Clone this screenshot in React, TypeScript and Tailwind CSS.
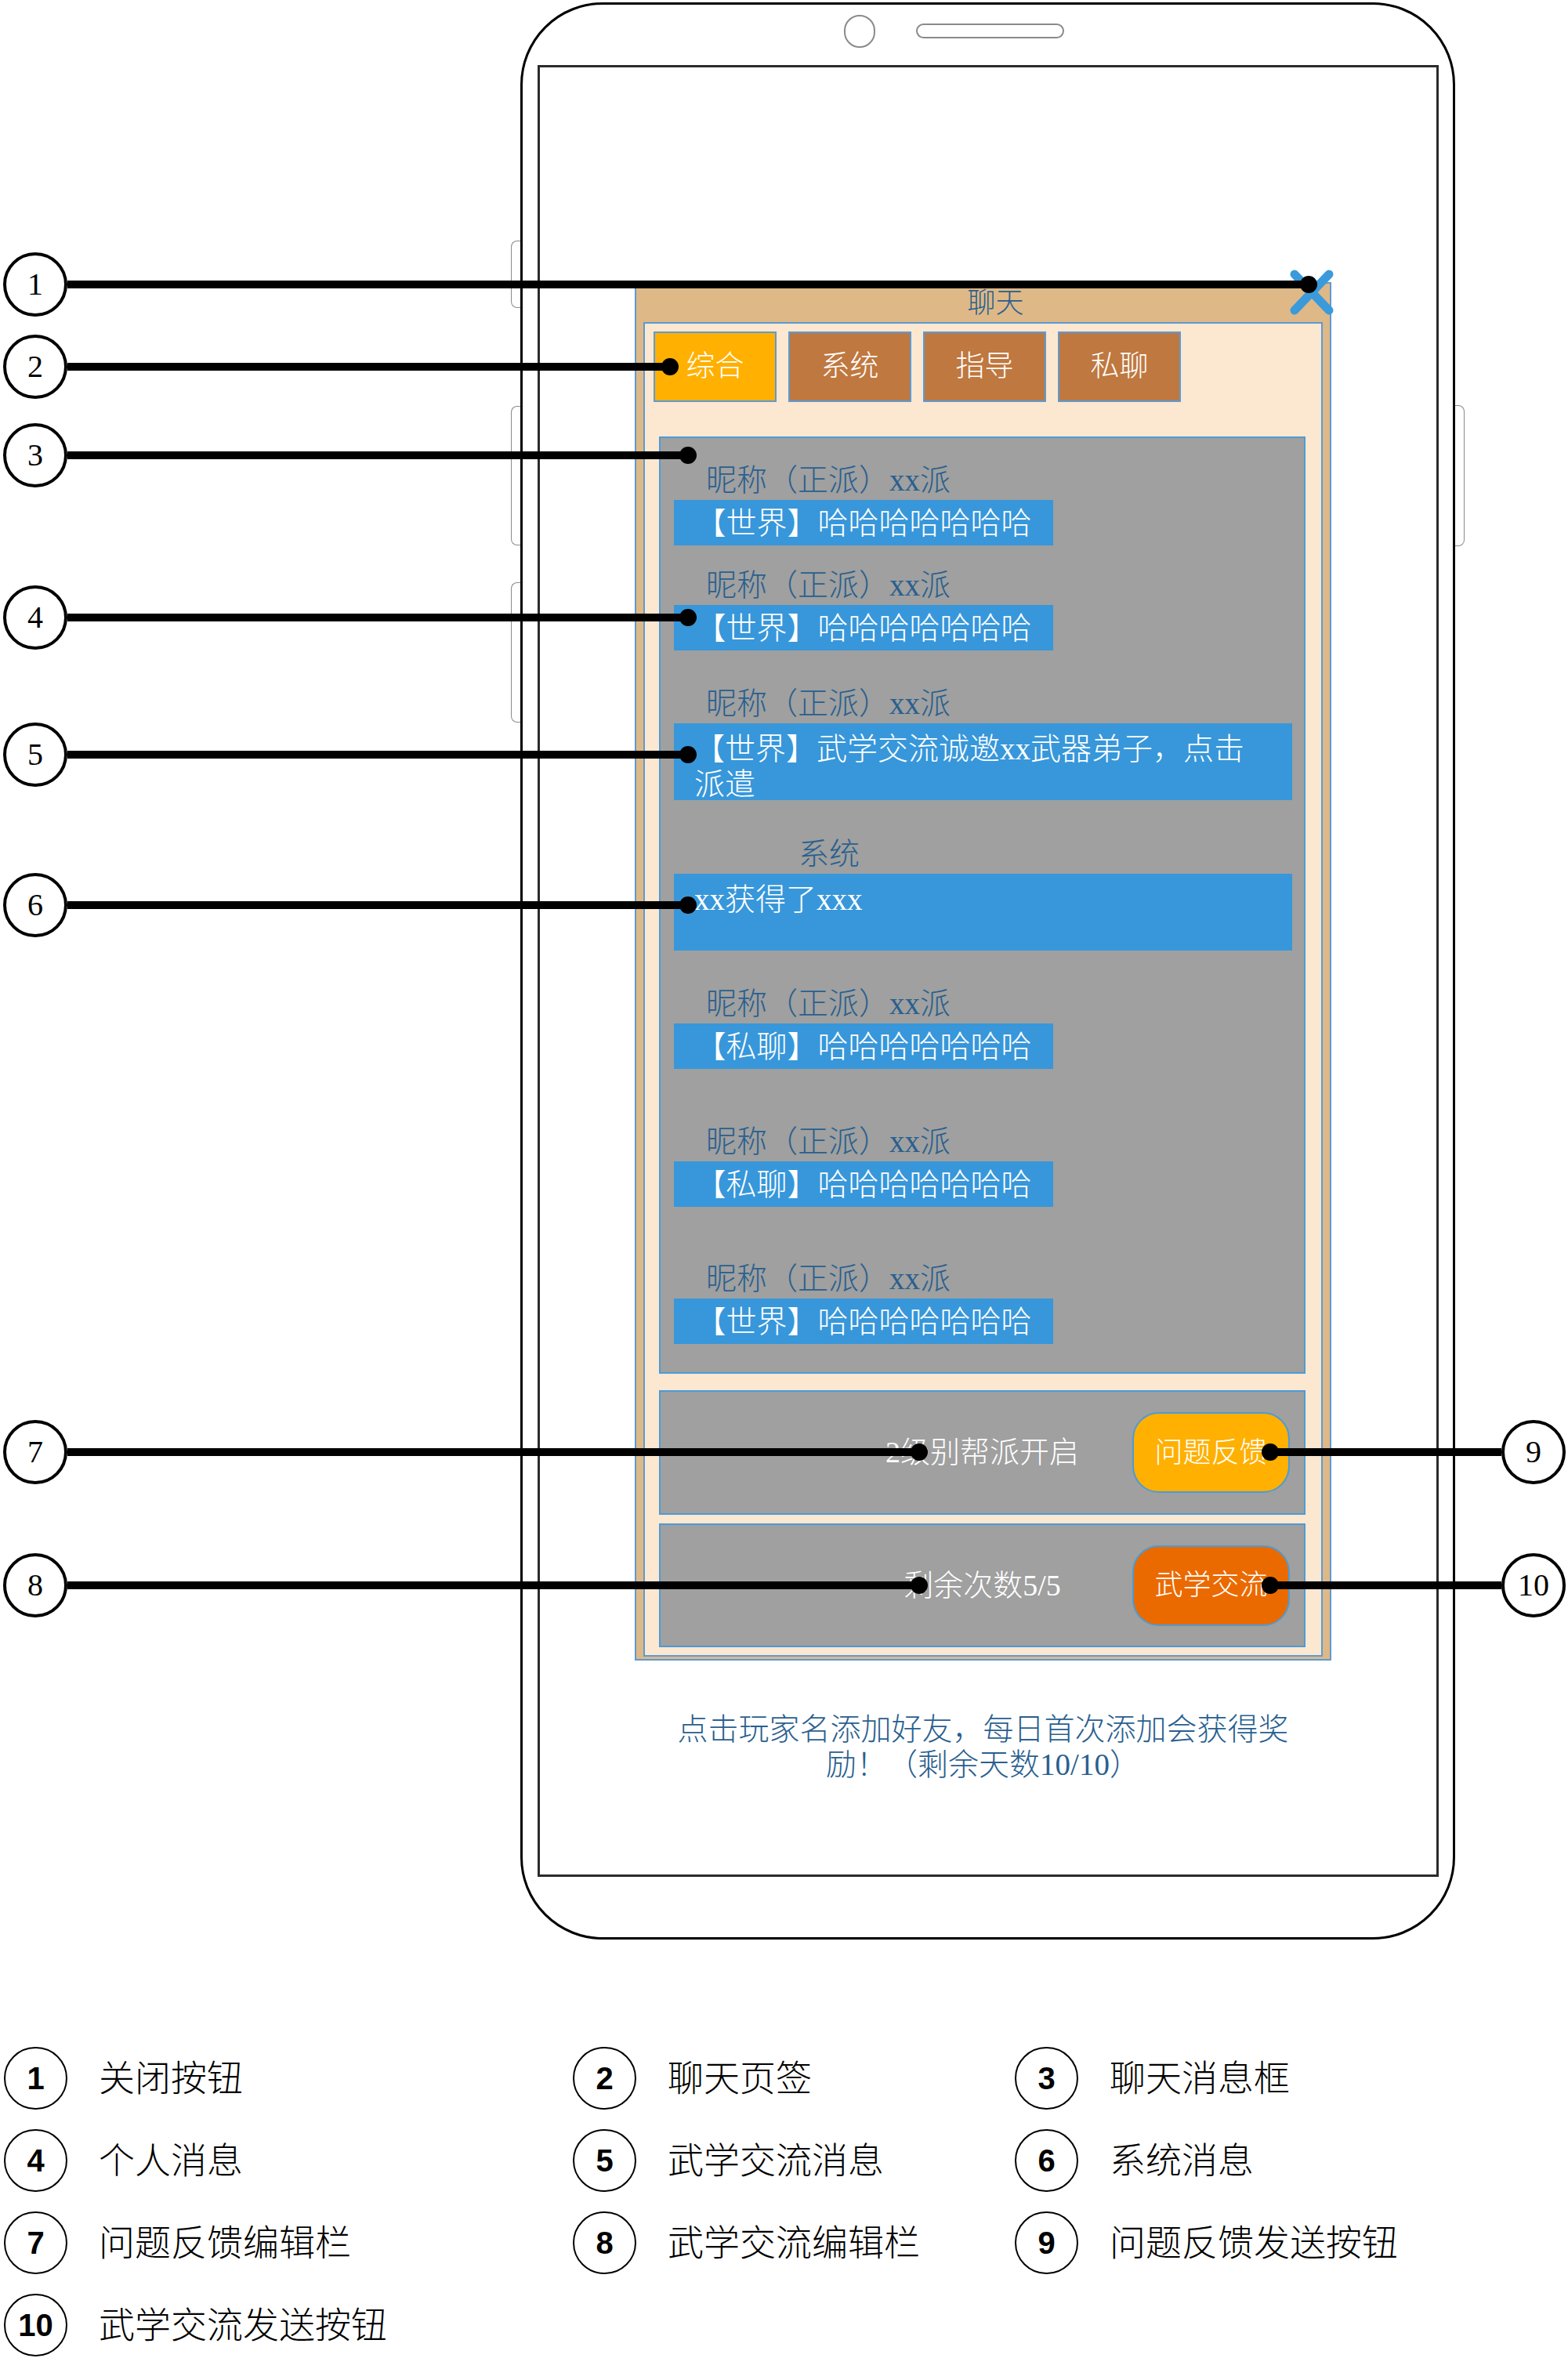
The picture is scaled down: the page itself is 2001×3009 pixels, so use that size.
const serif = "font-['Liberation_Serif','Noto_Sans_CJK_SC',serif]";
const sans = "font-['Liberation_Sans','Noto_Sans_CJK_SC',sans-serif]";

type Msg = {
  gap: string;
  label: string;
  labelPad: string;
  text: string;
  wide: boolean;
};

const messages: Msg[] = [
  { gap: "mt-0", label: "昵称（正派）xx派", labelPad: "pl-[41px]", text: "【世界】哈哈哈哈哈哈哈", wide: false },
  { gap: "mt-[31px]", label: "昵称（正派）xx派", labelPad: "pl-[41px]", text: "【世界】哈哈哈哈哈哈哈", wide: false },
  { gap: "mt-[48px]", label: "昵称（正派）xx派", labelPad: "pl-[41px]", text: "【世界】武学交流诚邀xx武器弟子，点击派遣", wide: true },
  { gap: "mt-[49px]", label: "系统", labelPad: "pl-[159px]", text: "xx获得了xxx", wide: true },
  { gap: "mt-[48px]", label: "昵称（正派）xx派", labelPad: "pl-[41px]", text: "【私聊】哈哈哈哈哈哈哈", wide: false },
  { gap: "mt-[73px]", label: "昵称（正派）xx派", labelPad: "pl-[41px]", text: "【私聊】哈哈哈哈哈哈哈", wide: false },
  { gap: "mt-[72px]", label: "昵称（正派）xx派", labelPad: "pl-[41px]", text: "【世界】哈哈哈哈哈哈哈", wide: false },
];

const callouts = [
  { n: "1", y: 363, x: 1670, right: false },
  { n: "2", y: 468, x: 855, right: false },
  { n: "3", y: 581, x: 878, right: false },
  { n: "4", y: 788, x: 878, right: false },
  { n: "5", y: 963, x: 878, right: false },
  { n: "6", y: 1155, x: 878, right: false },
  { n: "7", y: 1853, x: 1173, right: false },
  { n: "8", y: 2023, x: 1173, right: false },
  { n: "9", y: 1853, x: 1621, right: true },
  { n: "10", y: 2023, x: 1621, right: true },
];

const legend = [
  { n: "1", t: "关闭按钮" },
  { n: "2", t: "聊天页签" },
  { n: "3", t: "聊天消息框" },
  { n: "4", t: "个人消息" },
  { n: "5", t: "武学交流消息" },
  { n: "6", t: "系统消息" },
  { n: "7", t: "问题反馈编辑栏" },
  { n: "8", t: "武学交流编辑栏" },
  { n: "9", t: "问题反馈发送按钮" },
  { n: "10", t: "武学交流发送按钮" },
];

const tabs = ["综合", "系统", "指导", "私聊"];

const Bar = ({
  text,
  button,
  color,
  height,
}: {
  text: string;
  button: string;
  color: string;
  height: string;
}) => (
  <div className={`grid grid-cols-[1fr_auto_1fr] items-center border-2 border-[#4c9bd6] bg-[#9fa09f] ${height}`}>
    <div />
    <span className="text-[38px] font-light leading-[45px] text-white">{text}</span>
    <div
      className={`mr-[18px] flex h-[103px] w-[201px] items-center justify-center justify-self-end rounded-[34px] border-2 border-[#4c9bd6] text-[36px] font-light text-white ${color}`}
    >
      {button}
    </div>
  </div>
);

const Callout = ({ n, y, x, right }: { n: string; y: number; x: number; right: boolean }) => {
  const circleLeft = right ? 1916 : 4;
  const lineLeft = right ? x : 86;
  const lineWidth = right ? 1916 - x : x - 86;
  return (
    <>
      <div className="absolute h-[10px] bg-black" style={{ left: lineLeft, top: y - 5, width: lineWidth }} />
      <div className="absolute h-[22px] w-[22px] rounded-full bg-black" style={{ left: x - 11, top: y - 11 }} />
      <div
        className={`absolute flex h-[82px] w-[82px] items-center justify-center rounded-full border-4 border-black bg-white text-[40px] leading-none text-black ${serif}`}
        style={{ left: circleLeft, top: y - 41 }}
      >
        {n}
      </div>
    </>
  );
};

export default function App() {
  return (
    <div className={`relative h-[3009px] w-[2001px] overflow-hidden bg-white ${serif}`}>
      <div className="pt-[3px]">
        {/* Phone */}
        <div className="relative ml-[664px] flex h-[2472px] w-[1193px] flex-col rounded-[105px] border-[3px] border-black">
          {/* side keys */}
          <div className="absolute left-[-15px] top-[301px] h-[86px] w-[12px] rounded-l-[8px] border-[1.5px] border-r-0 border-[#8a8a8a]" />
          <div className="absolute left-[-15px] top-[512px] h-[178px] w-[12px] rounded-l-[8px] border-[1.5px] border-r-0 border-[#8a8a8a]" />
          <div className="absolute left-[-15px] top-[737px] h-[179px] w-[12px] rounded-l-[8px] border-[1.5px] border-r-0 border-[#8a8a8a]" />
          <div className="absolute right-[-15px] top-[511px] h-[180px] w-[12px] rounded-r-[8px] border-[1.5px] border-l-0 border-[#8a8a8a]" />

          {/* camera + speaker */}
          <div className="flex h-[77px] items-start pl-[410px] pt-[13px]">
            <div className="h-[42px] w-[40px] rounded-full border-2 border-[#8a8a8a]" />
            <div className="ml-[52px] mt-[11px] h-[19px] w-[189px] rounded-full border-2 border-[#8a8a8a]" />
          </div>

          {/* Screen */}
          <div className="ml-[19px] mr-[18px] h-[2312px] border-[3px] border-[#2b2b2b] pl-[121px] pt-[274px]">
            {/* Chat panel */}
            <div className="relative w-[889px] border-2 border-[#5b9bd5] bg-[#deb887] px-[9px] pb-[3px]">
              <svg className="absolute left-[832px] top-[-19px] h-[60px] w-[60px]" viewBox="0 0 60 60">
                <path d="M8 7 L52 53 M52 7 L8 53" stroke="#3a9adb" strokeWidth="11" strokeLinecap="round" fill="none" />
              </svg>
              <div className="flex h-[49px] items-center justify-center pl-[32px] text-[36px] font-light text-[#2a5f8f]">聊天</div>

              <div className="border-2 border-[#5b9bd5] bg-[#fce7d0] pb-[10px] pl-[18px] pr-[20px] pt-[10px]">
                {/* Tabs */}
                <div className="ml-[-7px] flex gap-[15px]">
                  {tabs.map((t, i) => (
                    <div
                      key={t}
                      className={`flex h-[90px] w-[157px] items-center justify-center border-2 border-[#5b9bd5] text-[37px] font-light text-white ${
                        i === 0 ? "bg-[#ffb000]" : "bg-[#bf783f]"
                      }`}
                    >
                      {t}
                    </div>
                  ))}
                </div>

                {/* Message list */}
                <div className="mt-[44px] flex h-[1196px] flex-col border-2 border-[#4c9bd6] bg-[#9fa09f] pl-[17px] pr-[15px] pt-[34px]">
                  {messages.map((m, i) => (
                    <div key={i} className={m.gap}>
                      <div className={`h-[40px] text-[39px] font-light leading-[40px] text-[#2a5f8f] ${m.labelPad}`}>{m.label}</div>
                      {m.wide ? (
                        <div className="mt-[5px] h-[98px] w-full bg-[#3797da] pl-[26px] pr-[30px] pt-[10px] text-[39px] font-light leading-[45px] text-white">
                          {m.text}
                        </div>
                      ) : (
                        <div className="mt-[5px] flex h-[58px] w-[484px] items-center justify-center bg-[#3797da] text-[39px] font-light leading-[45px] text-white">
                          {m.text}
                        </div>
                      )}
                    </div>
                  ))}
                </div>

                <div className="mt-[21px]">
                  <Bar text="2级别帮派开启" button="问题反馈" color="bg-[#ffb000]" height="h-[159px]" />
                </div>
                <div className="mt-[11px]">
                  <Bar text="剩余次数5/5" button="武学交流" color="bg-[#eb6a00]" height="h-[158px]" />
                </div>
              </div>
            </div>

            <p className="mt-[65px] w-[889px] px-[49px] text-center text-[39px] font-light leading-[45px] text-[#2a5f8f]">
              点击玩家名添加好友，每日首次添加会获得奖励！（剩余天数10/10）
            </p>
          </div>
        </div>
      </div>

      {/* Legend */}
      <div className="mt-[137px] grid grid-cols-[726px_564px_auto] gap-y-[25px] pl-[5px]">
        {legend.map((l) => (
          <div key={l.n} className="flex items-center gap-[40px]">
            <div className="flex h-[80px] w-[81px] items-center justify-center rounded-full border-2 border-black font-['Liberation_Sans_Narrow','Liberation_Sans',sans-serif] text-[40px] font-bold text-black">
              {l.n}
            </div>
            <span className={`text-[46px] font-light leading-none text-black ${sans}`}>{l.t}</span>
          </div>
        ))}
      </div>

      {/* Callouts */}
      {callouts.map((c) => (
        <Callout key={c.n} {...c} />
      ))}
    </div>
  );
}
